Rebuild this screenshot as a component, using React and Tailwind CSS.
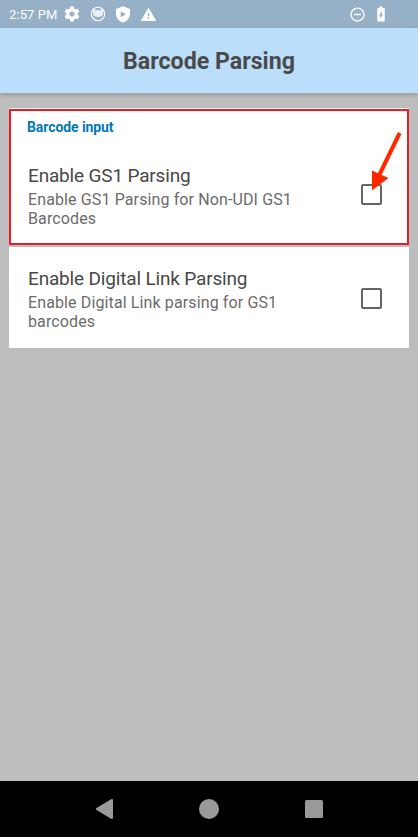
function StatusBar() {
  return (
    <div className="flex h-7 items-center bg-[#95b0c7] pl-[9px] pr-[31px] text-white">
      <span className="w-[56px] whitespace-nowrap pt-px text-[13px] leading-[27px] tracking-[0.1px]">2:57 PM</span>
      <svg className="-ml-[2px] h-[18px] w-[18px]" viewBox="0 0 24 24" fill="currentColor">
        <path d="M19.43 12.98c.04-.32.07-.64.07-.98s-.03-.66-.07-.98l2.11-1.65c.19-.15.24-.42.12-.64l-2-3.46c-.12-.22-.39-.3-.61-.22l-2.49 1c-.52-.4-1.08-.73-1.69-.98l-.38-2.65C14.46 2.18 14.25 2 14 2h-4c-.25 0-.46.18-.49.42l-.38 2.65c-.61.25-1.17.59-1.69.98l-2.49-1c-.23-.09-.49 0-.61.22l-2 3.46c-.13.22-.07.49.12.64l2.11 1.65c-.04.32-.07.65-.07.98s.03.66.07.98l-2.11 1.65c-.19.15-.24.42-.12.64l2 3.46c.12.22.39.3.61.22l2.49-1c.52.4 1.08.73 1.69.98l.38 2.65c.03.24.24.42.49.42h4c.25 0 .46-.18.49-.42l.38-2.65c.61-.25 1.17-.59 1.69-.98l2.49 1c.23.09.49 0 .61-.22l2-3.46c.12-.22.07-.49-.12-.64l-2.11-1.65zM12 15.5c-1.93 0-3.5-1.57-3.5-3.5s1.57-3.5 3.5-3.5 3.5 1.57 3.5 3.5-1.57 3.5-3.5 3.5z" />
      </svg>
      <svg className="ml-[9px] h-4 w-4" viewBox="0 0 16 16">
        <circle cx="8" cy="8" r="6.7" fill="none" stroke="currentColor" strokeWidth="1.1" />
        <path d="M3.4 2.8L5.5 4.2Q8 3.6 10.5 4.2L12.6 2.8L13.2 8Q12.4 10.8 8 11Q3.6 10.8 2.8 8Z" fill="currentColor" fillOpacity="0.8" />
      </svg>
      <svg className="ml-[8px] h-[17px] w-[18px]" viewBox="0 0 18 17" fill="currentColor" fillRule="evenodd">
        <path d="M9 .3L16 3V8c0 3.9-3 7.1-7 8.6C5 15.1 2 11.9 2 8V3L9 .3zM6.8 5.2v6l5-3z" />
      </svg>
      <svg className="ml-[8px] h-[17px] w-[17px]" viewBox="0 0 24 24" fill="currentColor">
        <path d="M1 21h22L12 2 1 21zm12-3h-2v-2h2v2zm0-4h-2v-4h2v4z" />
      </svg>
      <svg className="ml-auto h-[17px] w-[17px]" viewBox="0 0 24 24" fill="currentColor">
        <path d="M7 11v2h10v-2H7zm5-9C6.48 2 2 6.48 2 12s4.48 10 10 10 10-4.48 10-10S17.52 2 12 2zm0 18c-4.41 0-8-3.59-8-8s3.59-8 8-8 8 3.59 8 8-3.59 8-8 8z" />
      </svg>
      <svg className="-mr-[3px] ml-[6px] h-[18px] w-[18px]" viewBox="0 0 24 24" fill="currentColor">
        <path d="M15.67 4H14V2h-4v2H8.33C7.6 4 7 4.6 7 5.33v15.33C7 21.4 7.6 22 8.33 22h7.33c.74 0 1.34-.6 1.34-1.33V5.33C17 4.6 16.4 4 15.67 4zM11 19v-5H9.5L13 7.5V12h1.5L11 19z" />
      </svg>
    </div>
  );
}

function Preference({ title, summary, children }) {
  return (
    <div className="flex items-start justify-between">
      <div>
        <div className="h-[27px] whitespace-nowrap text-[19px] leading-[25px] tracking-[-0.17px] text-[#484848]">{title}</div>
        <div className="w-[280px] text-[16px] leading-[19px] tracking-[0.12px] text-[#6b6b6b]">{summary}</div>
      </div>
      {children}
    </div>
  );
}

export default function App() {
  return (
    <div className="flex h-[837px] w-[418px] flex-col overflow-hidden bg-[#bdbdbd] font-['Roboto',sans-serif]">
      <StatusBar />
      <header className="flex h-[65px] shrink-0 items-center justify-center bg-[#bbdefb] shadow-[0_2px_5px_rgba(0,0,0,0.2)]">
        <h1 className="pt-px text-[23.2px] font-bold leading-[28px] text-[#4a4a4a]">Barcode Parsing</h1>
      </header>
      <main className="mx-[9px] mt-[15px] grow">
        <section className="bg-white pt-px">
          <div className="h-[136px] border-2 border-[#ed1c24] pl-[17px] pr-[25px] pt-[7px]">
            <h2 className="-ml-px h-[45px] text-[14px] font-bold leading-[18px] tracking-[-0.08px] text-[#0279b8]">Barcode input</h2>
            <Preference title="Enable GS1 Parsing" summary="Enable GS1 Parsing for Non-UDI GS1 Barcodes">
              <div className="relative mt-[21px] h-[21px] w-[21px] rounded-[2px] border-2 border-[#666]">
                <svg className="absolute -top-[54px] left-[8px] h-[62px] w-[34px]" viewBox="0 0 34 62">
                  <path d="M28.7 1L8 43.5" stroke="#ff2600" strokeWidth="4" />
                  <path d="M1 38.5V58.5L17.5 46z" fill="#ff2600" />
                </svg>
              </div>
            </Preference>
          </div>
        </section>
        <section className="mt-[2px] h-[101px] bg-white pl-[19px] pr-[27px] pt-[19px]">
          <Preference title="Enable Digital Link Parsing" summary="Enable Digital Link parsing for GS1 barcodes">
            <div className="mt-[22px] h-[21px] w-[21px] rounded-[2px] border-2 border-[#666]" />
          </Preference>
        </section>
      </main>
      <nav className="flex h-14 shrink-0 items-center justify-between bg-black px-[95px] text-[#999]">
        <svg className="h-5 w-[18px]" viewBox="0 0 18 20" fill="currentColor">
          <path d="M1.5 9L16 .3Q18 -.4 18 1.5V18.5Q18 20.4 16 19.7L1.5 11Q0 10 1.5 9z" />
        </svg>
        <span className="h-5 w-5 rounded-full bg-[#999]" />
        <span className="h-[18px] w-[18px] rounded-[1.5px] bg-[#999]" />
      </nav>
    </div>
  );
}
